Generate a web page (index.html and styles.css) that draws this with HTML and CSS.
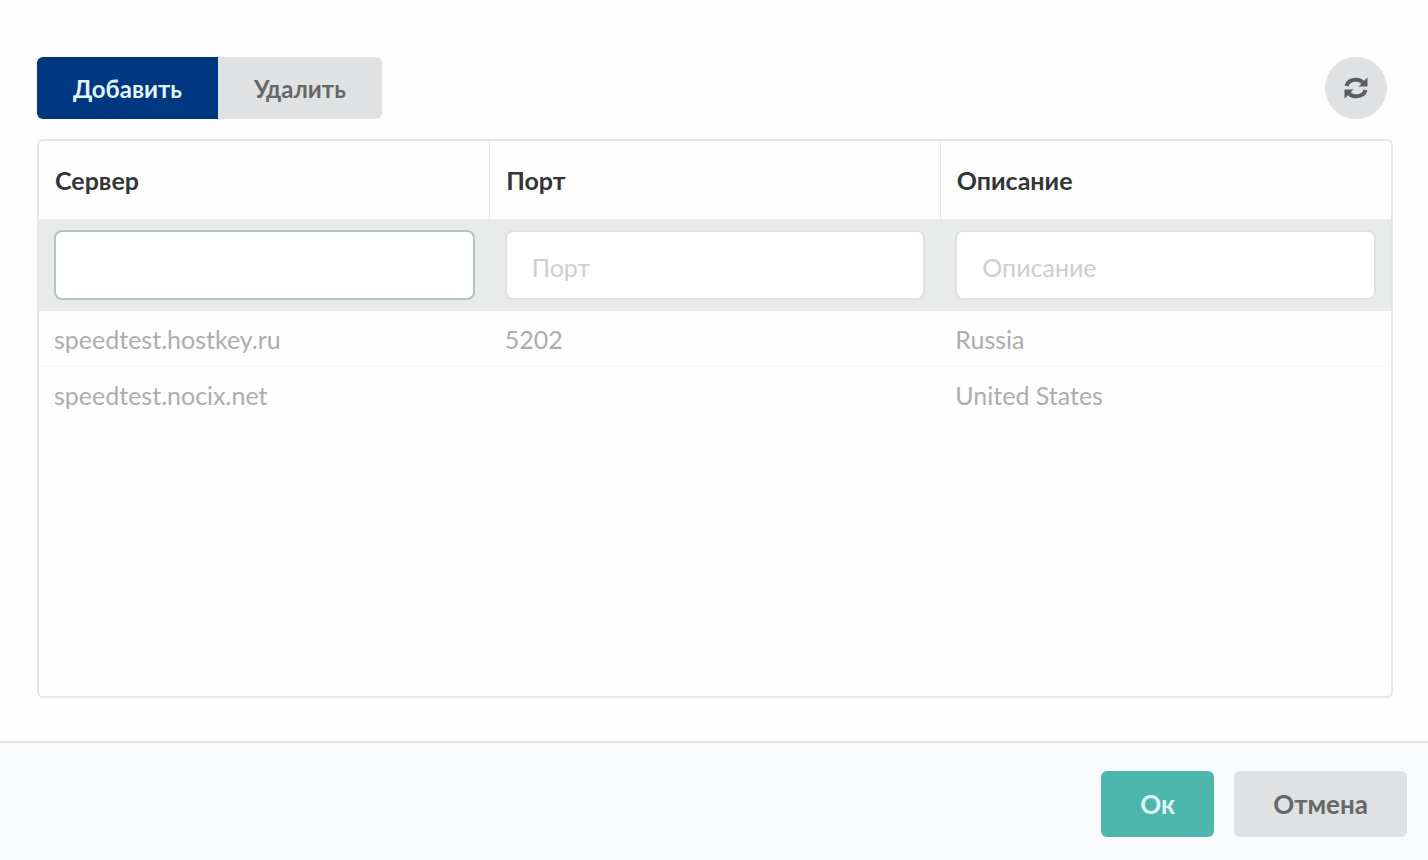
FILE: index.html
```
<!DOCTYPE html>
<html lang="ru">
  <head>
    <meta charset="UTF-8" />
    <meta name="viewport" content="width=device-width, initial-scale=1.0" />
    <title>Серверы</title>
    <link rel="stylesheet" href="styles.css">
  </head>
  <body>
    <form class="modal">
      <div class="content">
        <div class="toolbar">
          <div class="button-group">
            <button type="button" class="btn btn-primary">Добавить</button>
            <button type="button" class="btn">Удалить</button>
          </div>
          <button type="button" class="btn-refresh" aria-label="Обновить">
            <svg viewBox="0 0 24 24" width="24" height="24">
              <path d="M2.500 10C3.500 6 7.300 3.700 12 3.700c3 0 5.200 1 7 2.800" />
              <path d="M21.500 14c-1 4-4.800 6.300-9.500 6.300-3 0-5.200-1-7-2.800" />
              <path class="arrow" d="M23.500 1.500v9H14.500z" />
              <path class="arrow" d="M.5 22.500v-9H9.500z" />
            </svg>
          </button>
        </div>

        <div class="grid">
          <table>
            <thead>
              <tr>
                <th>Сервер</th>
                <th>Порт</th>
                <th>Описание</th>
              </tr>
            </thead>
            <tbody>
              <tr class="edit-row">
                <td><input type="text" class="active" aria-label="Сервер" /></td>
                <td><input type="text" placeholder="Порт" aria-label="Порт" /></td>
                <td><input type="text" placeholder="Описание" aria-label="Описание" /></td>
              </tr>
              <tr>
                <td>speedtest.hostkey.ru</td>
                <td>5202</td>
                <td>Russia</td>
              </tr>
              <tr>
                <td>speedtest.nocix.net</td>
                <td></td>
                <td>United States</td>
              </tr>
            </tbody>
          </table>
        </div>
      </div>

      <div class="actions">
        <button type="submit" class="btn btn-ok">Ок</button>
        <button type="button" class="btn btn-cancel">Отмена</button>
      </div>
    </form>
  </body>
</html>
```
FILE: styles.css
```
* {
  box-sizing: border-box;
}

body {
  margin: 0;
  font-family: Lato, "Open Sans", sans-serif;
  font-size: 25px;
  background-color: #fefefe;
}

.modal {
  display: flex;
  flex-direction: column;
  min-height: 100vh;
}

.content {
  flex: 1;
  display: flex;
  flex-direction: column;
  gap: 20px;
  padding: 57px 35px 43px 37px;
}

.toolbar {
  display: flex;
  justify-content: space-between;
  align-items: center;
  padding-right: 6px;
}

.button-group {
  display: flex;
  border-radius: 6px;
  overflow: hidden;
}

.btn {
  height: 62px;
  padding: 0 36px;
  border: none;
  background-color: #e0e1e2;
  color: #666768;
  font-family: inherit;
  font-size: 24px;
  font-weight: 700;
  cursor: pointer;
}

.btn-primary {
  background-color: #003781;
  color: #e2f4fd;
}

.btn-refresh {
  display: flex;
  align-items: center;
  justify-content: center;
  width: 62px;
  height: 62px;
  padding: 0;
  border: none;
  border-radius: 50%;
  background-color: #e0e1e2;
  cursor: pointer;
}

.btn-refresh svg {
  fill: none;
  stroke: #5c5d5e;
  stroke-width: 4;
}

.btn-refresh .arrow {
  fill: #5c5d5e;
  stroke: none;
}

.grid {
  flex: 1;
  border: 2px solid #e5e6e6;
  border-radius: 6px;
  overflow: hidden;
}

table {
  width: 100%;
  border-collapse: collapse;
  table-layout: fixed;
}

th {
  height: 78px;
  padding: 0 16px;
  text-align: left;
  font-weight: 700;
  color: #333435;
}

th + th {
  border-left: 1px solid #e6e6e6;
}

td {
  height: 55px;
  padding: 2px 15px 0;
  color: #adadad;
}

tr + tr td {
  border-bottom: 1px solid #f6f6f6;
}

tr:last-child td {
  border-bottom: none;
}

.edit-row td {
  height: 92px;
  padding-top: 0;
  background-color: #e9eaea;
}

input {
  display: block;
  width: 100%;
  height: 70px;
  padding: 3px 25px 0;
  border: 2px solid #e0e1e1;
  border-radius: 8px;
  background-color: #fff;
  color: #333435;
  font-family: inherit;
  font-size: 25px;
}

input.active {
  border-color: #b2c2c9;
}

input:focus {
  border-color: #85b7d9;
  outline: none;
}

input::placeholder {
  color: #cecece;
  opacity: 1;
}

.actions {
  display: flex;
  justify-content: flex-end;
  gap: 20px;
  padding: 28px 21px 23px;
  border-top: 2px solid #dfe2e2;
  background-color: #f9fbfc;
}

.actions .btn {
  height: 66px;
  padding: 0 39px;
  border-radius: 6px;
  font-size: 26px;
}

.actions .btn-ok {
  background-color: #4db6ac;
  color: #dcfaf7;
}
```
